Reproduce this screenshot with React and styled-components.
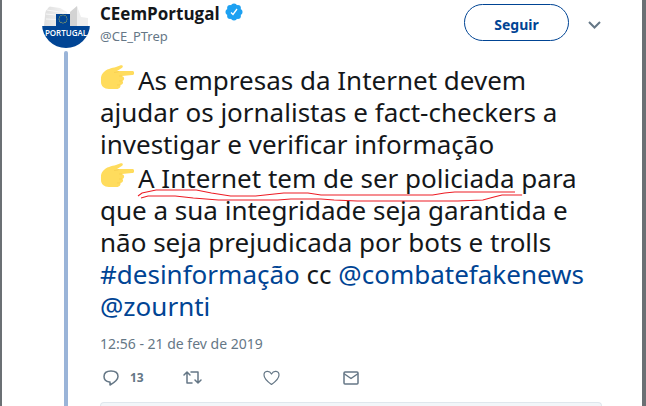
import React from 'react';
import styled, { createGlobalStyle } from 'styled-components';

const GlobalStyle = createGlobalStyle`
  * { box-sizing: border-box; }
  body {
    margin: 0;
    background: #fff;
    color: #14171a;
    font-family: "Noto Sans", "Open Sans", sans-serif;
  }
`;

const Page = styled.main`
  display: flex;
  min-height: 100vh;
  padding: 0 40px;
  border: solid #6b7074;
  border-width: 0 4px 0 2px;
`;

const ThreadColumn = styled.div`
  display: flex;
  flex-direction: column;
  align-items: center;
  flex: 0 0 48px;
  gap: 3px;
  margin-right: 10px;

  svg { display: block; }
`;

const ThreadLine = styled.div`
  flex: 1;
  width: 4px;
  border-radius: 2px 2px 0 0;
  background: #9ab4d8;
`;

const Tweet = styled.article`
  display: flex;
  flex-direction: column;
  flex: 1;
  min-width: 0;
`;

const Header = styled.header`
  display: flex;
  align-items: flex-start;
  padding-top: 4px;
`;

const Author = styled.div`
  flex: 1;
`;

const NameRow = styled.div`
  display: flex;
  align-items: center;
  gap: 5px;
  height: 20px;

  svg { margin-bottom: 4px; }
`;

const Name = styled.a`
  color: #14171a;
  font: bold 17px/20px "Open Sans", "Noto Sans", sans-serif;
  text-decoration: none;
`;

const Handle = styled.a`
  display: block;
  color: #657786;
  font-size: 13px;
  line-height: 24px;
  text-decoration: none;
`;

const FollowButton = styled.button`
  width: 105px;
  height: 37px;
  padding: 4px 0 0;
  border: 1px solid #004494;
  border-radius: 19px;
  background: #fff;
  color: #004494;
  font: bold 14px/20px "Noto Sans", sans-serif;
`;

const IconButton = styled.button`
  display: flex;
  align-items: center;
  gap: 11px;
  padding: 0;
  border: 0;
  background: none;
  color: #657786;
  font: bold 12px/18px "Noto Sans", sans-serif;
`;

const MenuButton = styled(IconButton)`
  height: 42px;
  margin: 0 1px 0 19px;
`;

const Text = styled.p`
  margin: 14px 0 0;
  font-size: 26px;
  line-height: 32px;
  white-space: nowrap;
`;

const Hand = styled.svg`
  display: inline-block;
  width: 34px;
  height: 26px;
  margin: 2px 4px 0 0;
  vertical-align: baseline;
`;

const TextLink = styled.a`
  color: #004494;
  text-decoration: none;
`;

const Marked = styled.span`
  position: relative;
`;

const Scribble = styled.svg`
  position: absolute;
  left: 0;
  bottom: -6px;
  width: 102%;
  height: 14px;
  overflow: visible;
  pointer-events: none;
`;

const Time = styled.time`
  margin-top: 12px;
  color: #657786;
  font-size: 14px;
  line-height: 20px;
`;

const Actions = styled.div`
  display: grid;
  grid-template-columns: repeat(4, 80px);
  height: 18px;
  margin: 15px 0 15px 3px;
`;

const Quote = styled.section`
  flex: 1;
  min-height: 4px;
  border: 1px solid #dfe7ed;
  border-bottom: 0;
  border-radius: 4px 4px 0 0;
  background: #f2f6f9;
`;

const PointingHand = () => (
  <Hand viewBox="0 0 34 26" role="img" aria-label="👉">
    <path
      fill="#ffdc5d"
      d="M3 9C6 5 12 4 16 3L20 1.500C23 .5 24 3 21 4.500L17 7H32C35 7 35 11 32 11L22 12C25 13 24.500 16 22.500 17C24 19 22 21 20.500 21C21 24 18 25 16 25H9C4 25 1 22 1 18C1 14 .5 12 3 9Z"
    />
    <path d="M14 8.500Q17 8.500 19 7.500M19 12H22M19 17H22M17 21H20" stroke="#f9d152" strokeWidth="1" fill="none" />
  </Hand>
);

const stars = Array.from({ length: 12 }, (_, i) => {
  const angle = (i * Math.PI) / 6;
  return [21 + 4 * Math.sin(angle), 19 - 4 * Math.cos(angle)];
});

const Avatar = () => (
  <svg width="48" height="48" viewBox="0 0 48 48" role="img" aria-label="CEemPortugal">
    <defs>
      <clipPath id="avatar-circle"><circle cx="24" cy="24" r="24" /></clipPath>
      <linearGradient id="building" x1="0" x2="1">
        <stop offset="0" stopColor="#dedede" />
        <stop offset="1" stopColor="#f4f4f4" />
      </linearGradient>
    </defs>
    <g clipPath="url(#avatar-circle)">
      <path fill="#fff" d="M0 0H48V48H0Z" />
      <path fill="url(#building)" d="M4 6L18 8L25 12V26H2Z" />
      <path fill="#d3d3d3" d="M28 12L35 6L37 26H28Z" />
      <path fill="#eee" d="M35 6L39 17L46 18V26H35Z" />
      <path stroke="#f7f7f7" d="M5 10L24 13M4 14L24 16M4 19L23 20" />
      <path fill="#004494" d="M14 14H28V26H14ZM0 26H48V48H0Z" />
      {stars.map(([x, y], i) => <circle key={i} cx={x} cy={y} r=".6" fill="#b9bd55" />)}
      <text x="24" y="36" textAnchor="middle" fill="#fff" fontFamily="Open Sans, sans-serif" fontWeight="600" fontSize="8">PORTUGAL</text>
    </g>
  </svg>
);

const Verified = () => (
  <svg width="18" height="18" viewBox="0 0 18 18" role="img" aria-label="Conta verificada">
    <g fill="#1da1f2">
      <circle cx="9" cy="9" r="7" />
      {Array.from({ length: 8 }, (_, i) => (
        <circle key={i} cx={9 + 5.5 * Math.cos((i * Math.PI) / 4)} cy={9 + 5.5 * Math.sin((i * Math.PI) / 4)} r="3" />
      ))}
    </g>
    <path d="M6 9.500L8 11.500L12 6" fill="none" stroke="#fff" strokeWidth="1.300" />
  </svg>
);

const outline = { fill: 'none', stroke: 'currentColor', strokeWidth: 1.5, strokeLinejoin: 'round', strokeLinecap: 'round' };

const Reply = () => (
  <svg width="16" height="16" viewBox="0 0 16 16" {...outline}>
    <path d="M6.500 12C3 11.500 1 9.500 1 6.500C1 3 3.500 1 8 1S15 3 15 6.500C15 10 11.500 12.500 7 15V12Z" />
  </svg>
);

const Retweet = () => (
  <svg width="19" height="16" viewBox="0 0 19 16" {...outline}>
    <path d="M1 5L4 2L7 5M4 2V13H9M8 2H15V13M12 10L15 13L18 10" />
  </svg>
);

const Heart = () => (
  <svg width="17" height="16" viewBox="0 0 17 16" {...outline} strokeWidth="1.200">
    <path d="M8.500 14.500C5 12 1 8.500 1 5C1 .5 6.500 .3 8.500 4C10.500 .3 16 .5 16 5C16 8.500 12 12 8.500 14.500Z" />
  </svg>
);

const Envelope = () => (
  <svg width="17" height="16" viewBox="0 0 17 16" {...outline}>
    <rect x="1" y="2" width="14" height="12" rx="1" />
    <path d="M1.500 4L8 8.500L14.500 4" />
  </svg>
);

export default function App() {
  return (
    <>
      <GlobalStyle />
      <Page>
        <ThreadColumn>
          <Avatar />
          <ThreadLine />
        </ThreadColumn>
        <Tweet>
          <Header>
            <Author>
              <NameRow>
                <Name href="#perfil">CEemPortugal</Name>
                <Verified />
              </NameRow>
              <Handle href="#perfil">@CE_PTrep</Handle>
            </Author>
            <FollowButton type="button">Seguir</FollowButton>
            <MenuButton type="button" aria-label="Mais opções">
              <svg width="13" height="8" viewBox="0 0 13 8" {...outline} strokeWidth="2" strokeLinecap="butt" strokeLinejoin="miter">
                <path d="M1 1L6.500 6.500L12 1" />
              </svg>
            </MenuButton>
          </Header>
          <Text>
            <PointingHand />As empresas da Internet devem<br />
            ajudar os jornalistas e fact-checkers a<br />
            investigar e verificar informação<br />
            <PointingHand />
            <Marked>
              A Internet tem de ser policiada
              <Scribble viewBox="0 0 382 14" preserveAspectRatio="none" fill="none" stroke="#ed1c24" aria-hidden="true">
                <path d="M0 8L4 5L18 2H58L73 5L92 8H117L145 5H169L182 7H293L305 5L315 4H375" />
                <path d="M3 10L10 8H37L55 10L80 12H139L152 11H182L195 12L218 13H318L343 12L354 9L362 7H382" />
              </Scribble>
            </Marked>{' '}
            para<br />
            que a sua integridade seja garantida e<br />
            não seja prejudicada por bots e trolls<br />
            <TextLink href="#desinformacao">#desinformação</TextLink> cc{' '}
            <TextLink href="#combatefakenews">@combatefakenews</TextLink><br />
            <TextLink href="#zournti">@zournti</TextLink>
          </Text>
          <Time dateTime="2019-02-21T12:56">12:56 - 21 de fev de 2019</Time>
          <Actions>
            <IconButton type="button" aria-label="Responder, 13"><Reply />13</IconButton>
            <IconButton type="button" aria-label="Retweetar"><Retweet /></IconButton>
            <IconButton type="button" aria-label="Gostar"><Heart /></IconButton>
            <IconButton type="button" aria-label="Mensagem direta"><Envelope /></IconButton>
          </Actions>
          <Quote aria-label="Tweet citado" />
        </Tweet>
      </Page>
    </>
  );
}
